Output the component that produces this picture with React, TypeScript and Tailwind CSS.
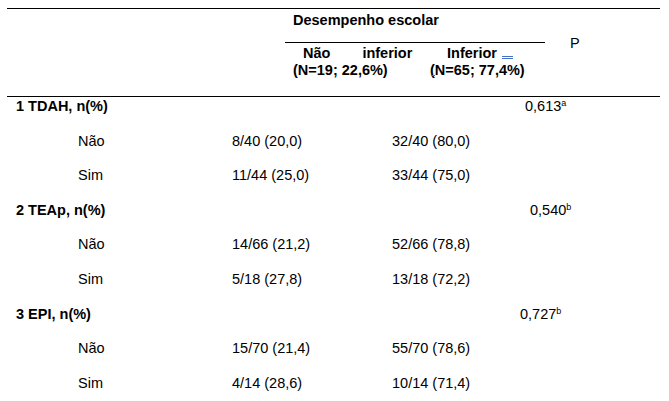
import React from 'react';

type Row =
  | { kind: 'group'; label: string; p: string; sup: string; pl: string }
  | { kind: 'item'; label: string; a: string; b: string };

const rows: Row[] = [
  { kind: 'group', label: '1 TDAH, n(%)', p: '0,613', sup: 'a', pl: 'pl-[5px]' },
  { kind: 'item', label: 'Não', a: '8/40 (20,0)', b: '32/40 (80,0)' },
  { kind: 'item', label: 'Sim', a: '11/44 (25,0)', b: '33/44 (75,0)' },
  { kind: 'group', label: '2 TEAp, n(%)', p: '0,540', sup: 'b', pl: 'pl-[10px]' },
  { kind: 'item', label: 'Não', a: '14/66 (21,2)', b: '52/66 (78,8)' },
  { kind: 'item', label: 'Sim', a: '5/18 (27,8)', b: '13/18 (72,2)' },
  { kind: 'group', label: '3 EPI, n(%)', p: '0,727', sup: 'b', pl: 'pl-[0px]' },
  { kind: 'item', label: 'Não', a: '15/70 (21,4)', b: '55/70 (78,6)' },
  { kind: 'item', label: 'Sim', a: '4/14 (28,6)', b: '10/14 (71,4)' },
];

export default function App() {
  return (
    <div className="w-[669px] h-[401px] bg-white overflow-hidden text-black text-[14.5px] leading-[17px] font-['Liberation_Sans',Arial,sans-serif]">
      <div className="ml-[7px] mt-[8px] w-[653px] border-t border-black">
        {/* Header */}
        <div className="flex h-[88px] border-b border-black">
          <div className="w-[278px]" />
          <div className="w-[260px]">
            <div className="h-[34px] border-b border-black pl-[8px] pt-[3px] font-bold">
              Desempenho escolar
            </div>
            <div className="flex pt-[2px] font-bold">
              <div className="w-[145px] pl-[8px]">
                <div className="flex">
                  <span className="ml-[10px]">Não</span>
                  <span className="ml-[32px]">inferior</span>
                </div>
                <div>(N=19; 22,6%)</div>
              </div>
              <div>
                <div className="flex items-start">
                  <span className="ml-[17px]">Inferior</span>
                  <span className="ml-[5px] mt-[11px] w-[11px] h-[3px] border-t border-b border-[#4472c4]" />
                </div>
                <div className="relative">
                  (N=65; 77,4%)
                  <span className="absolute left-[1px] top-[12px] w-[4px] h-[2px] border-b border-[#4472c4]" />
                </div>
              </div>
            </div>
          </div>
          <div className="pl-[25px] pt-[26px]">P</div>
        </div>

        {/* Body */}
        <div>
          {rows.map((row, i) =>
            row.kind === 'group' ? (
              <div key={i} className="flex h-[34.6px] pt-[1px]">
                <div className="w-[513px] pl-[9px] font-bold">{row.label}</div>
                <div className={row.pl}>
                  {row.p}
                  <span className="text-[9px] leading-none align-top relative top-[1px]">{row.sup}</span>
                </div>
              </div>
            ) : (
              <div key={i} className="flex h-[34.6px] pt-[1px]">
                <div className="w-[225px] pl-[71px]">{row.label}</div>
                <div className="w-[160px]">{row.a}</div>
                <div className="w-[128px]">{row.b}</div>
              </div>
            )
          )}
        </div>
      </div>
    </div>
  );
}
